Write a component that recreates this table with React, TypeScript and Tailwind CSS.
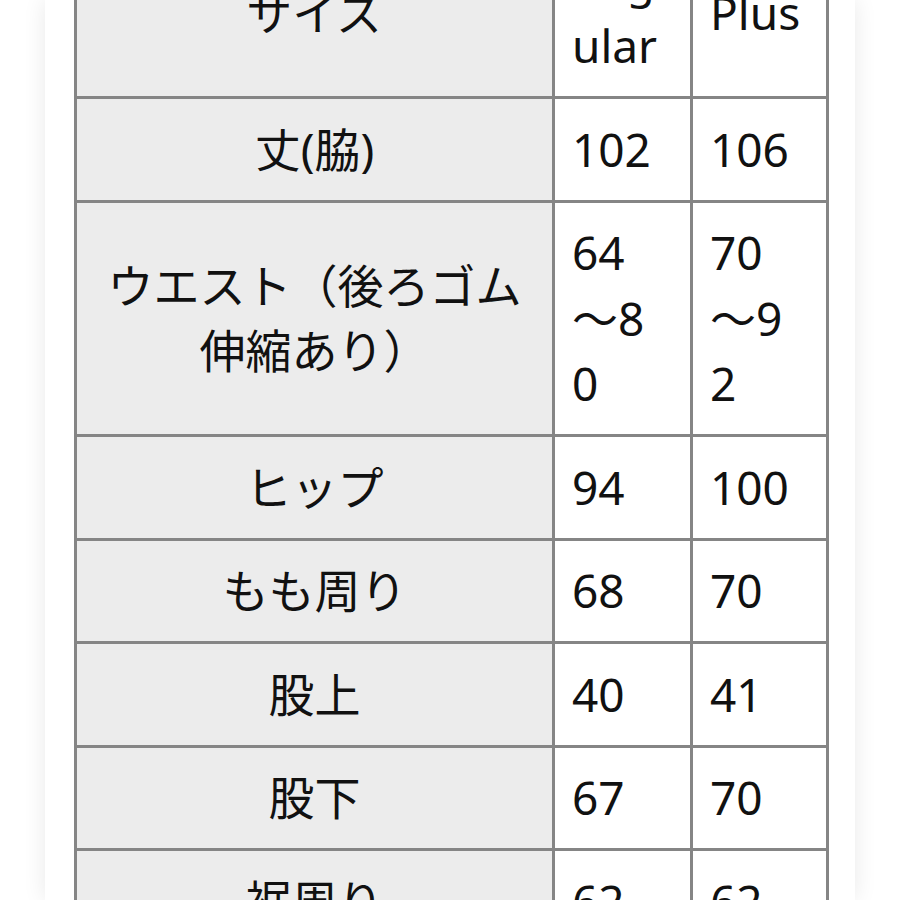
import React from "react";

type Row = { label: string[]; a: string[]; b: string[] };

const rows: Row[] = [
  { label: ["サイズ"], a: ["Reg", "ular"], b: ["Plus"] },
  { label: ["丈(脇)"], a: ["102"], b: ["106"] },
  { label: ["ウエスト（後ろゴム", "伸縮あり）"], a: ["64", "〜8", "0"], b: ["70", "〜9", "2"] },
  { label: ["ヒップ"], a: ["94"], b: ["100"] },
  { label: ["もも周り"], a: ["68"], b: ["70"] },
  { label: ["股上"], a: ["40"], b: ["41"] },
  { label: ["股下"], a: ["67"], b: ["70"] },
  { label: ["裾周り"], a: ["62"], b: ["62"] },
];

function Lines({ lines }: { lines: string[] }) {
  return (
    <>
      {lines.map((l, i) => (
        <div key={i} className="whitespace-nowrap">
          {l}
        </div>
      ))}
    </>
  );
}

export default function App() {
  return (
    <div className="h-[900px] w-[900px] overflow-hidden bg-white">
      <div className="mx-[45px] flow-root h-full bg-white px-[29px] shadow-[0_0_22px_rgba(0,0,0,0.09)]">
        <table
          className="mt-[-73px] w-[752px] table-fixed border-collapse text-[46px] leading-[65.5px] text-[#111]"
          style={{ fontFamily: '"Noto Sans", "Noto Sans CJK JP", sans-serif' }}
        >
          <colgroup>
            <col className="w-[478px]" />
            <col className="w-[138px]" />
            <col className="w-[136px]" />
          </colgroup>
          <tbody>
            {rows.map((r, i) => (
              <tr key={i}>
                <td className="border-[3px] border-[#858585] bg-[#ececec] px-[20px] py-[17.5px] text-center align-middle">
                  <Lines lines={r.label} />
                </td>
                <td className="border-[3px] border-[#858585] bg-white pl-[17px] pr-[6px] py-[17.5px] text-left align-middle">
                  <Lines lines={r.a} />
                </td>
                <td className="border-[3px] border-[#858585] bg-white pl-[17px] pr-[6px] py-[17.5px] text-left align-middle">
                  <Lines lines={r.b} />
                </td>
              </tr>
            ))}
          </tbody>
        </table>
      </div>
    </div>
  );
}
